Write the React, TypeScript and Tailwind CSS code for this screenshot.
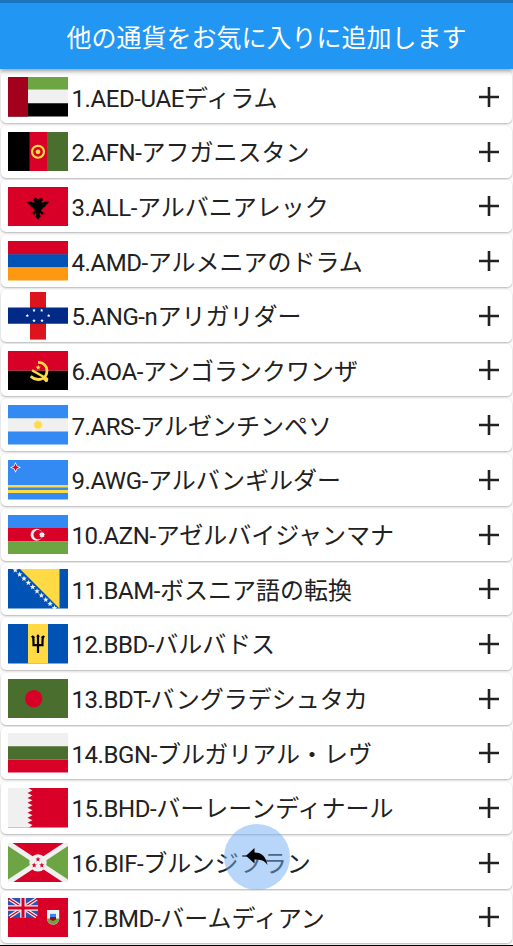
import React from "react";

type Currency = {
  code: string;
  name: string;
  flag: React.ReactNode;
  tall?: boolean;
};

function Star({ x, y, r = 1.5, fill = "#fff" }: { x: number; y: number; r?: number; fill?: string }) {
  return (
    <path
      transform={`translate(${x} ${y}) scale(${r})`}
      fill={fill}
      d="M0 -1 L.26 -.34 L.95 -.31 L.4 .13 L.59 .81 L0 .43 L-.59 .81 L-.4 .13 L-.95 -.31 L-.26 -.34 Z"
    />
  );
}

const CURRENCIES: Currency[] = [
  {
    code: "1.AED-UAE",
    name: "ディラム",
    flag: (
      <>
        <path fill="#6da544" d="M0 0h60v13H0z" />
        <path fill="#f0f0f0" d="M0 13h60v14H0z" />
        <path d="M0 26.5h60v13.5H0z" />
        <path fill="#a2001d" d="M0 0h20v40H0z" />
      </>
    ),
  },
  {
    code: "2.AFN-",
    name: "アフガニスタン",
    flag: (
      <>
        <path d="M0 0h22v40H0z" />
        <path fill="#d80027" d="M21.5 0h18v40h-18z" />
        <path fill="#496e2d" d="M39 0h21v40H39z" />
        <circle cx="30" cy="20" r="6" fill="none" stroke="#ffda44" strokeWidth="2.2" />
        <circle cx="30" cy="20" r="2.4" fill="#ffda44" />
      </>
    ),
  },
  {
    code: "3.ALL-",
    name: "アルバニアレック",
    flag: (
      <>
        <path fill="#d80027" d="M0 0h60v40H0z" />
        <path d="M25 12.5L27 11L30 12L33 11L35 12.5L34.2 14.5L33 15.2L34.500 16L37 15H41L39.800 17L38 18L37.200 20L35 21L34.500 22.600L32.800 23.200L34.200 25L37 27L34.500 26.800L34.200 28.500L32 26L31.500 27.500L32.800 29.500L30 33L27.200 29.500L28.500 27.500L28 26L25.800 28.500L25.500 26.800L23 27L25.800 25L27.200 23.200L25.500 22.600L25 21L22.800 20L22 18L20.200 17L19 15H23L25.500 16L27 15.200L25.800 14.500Z" />
      </>
    ),
  },
  {
    code: "4.AMD-",
    name: "アルメニアのドラム",
    flag: (
      <>
        <path fill="#d80027" d="M0 0h60v14H0z" />
        <path fill="#0052b4" d="M0 13.3h60v13.4H0z" />
        <path fill="#ff9811" d="M0 26.7h60V40H0z" />
      </>
    ),
  },
  {
    code: "5.ANG-n",
    name: "アリガリダー",
    tall: true,
    flag: (
      <>
        <path fill="#dc141b" d="M22 0h16v48H22z" />
        <path fill="#012a87" d="M0 15.6h60v16.4H0z" />
        <Star x={19.3} y={23.8} r={1.9} />
        <Star x={40.7} y={23.8} r={1.9} />
        <Star x={26} y={18.5} r={1.9} />
        <Star x={33.7} y={18.5} r={1.9} />
        <Star x={26} y={29} r={1.9} />
        <Star x={34} y={29} r={1.9} />
      </>
    ),
  },
  {
    code: "6.AOA-",
    name: "アンゴランクワンザ",
    flag: (
      <>
        <path fill="#d80027" d="M0 0h60v20H0z" />
        <path d="M0 20h60v20H0z" />
        <path fill="none" stroke="#ffda44" strokeWidth="2.8" d="M30 11.6c12-.7 12 17.4 0 17.2-3 0-5-1-7.3-3.2" />
        <path fill="none" stroke="#ffda44" strokeWidth="2.5" d="M24 19.4l15 8.6" />
        <path fill="#ffda44" d="M34.8 28.6l2.2-2.4 3.4 1.6-.6 3-2 .8z" />
        <Star x={30.2} y={16.7} r={2.7} fill="#ffda44" />
      </>
    ),
  },
  {
    code: "7.ARS-",
    name: "アルゼンチンペソ",
    flag: (
      <>
        <path fill="#338af3" d="M0 0h60v40H0z" />
        <path fill="#f0f0f0" d="M0 13.3h60v13.4H0z" />
        <circle cx="30" cy="20" r="3.4" fill="#ffda44" />
        <circle cx="30" cy="20" r="3.9" fill="none" stroke="#ffda44" strokeWidth="1" strokeDasharray="1.2 .6" />
      </>
    ),
  },
  {
    code: "9.AWG-",
    name: "アルバンギルダー",
    flag: (
      <>
        <path fill="#338af3" d="M0 0h60v40H0z" />
        <path fill="#ffda44" d="M0 25.3h60v2.4H0zM0 30.4h60v3H0z" />
        <path fill="#fff" d="M7.5 2l1.7 3.8 3.8 1.7-3.8 1.7-1.7 3.8-1.7-3.8L2 7.5l3.8-1.7z" />
        <path fill="#d80027" d="M7.5 3.9l1.2 2.4 2.4 1.2-2.4 1.2-1.2 2.4-1.2-2.4-2.4-1.2 2.4-1.2z" />
      </>
    ),
  },
  {
    code: "10.AZN-",
    name: "アゼルバイジャンマナ",
    flag: (
      <>
        <path fill="#338af3" d="M0 0h60v14H0z" />
        <path fill="#d80027" d="M0 13.2h60v13.5H0z" />
        <path fill="#6da544" d="M0 26.7h60V40H0z" />
        <circle cx="28.6" cy="19.9" r="6" fill="#f0f0f0" />
        <circle cx="30.2" cy="19.9" r="4.7" fill="#d80027" />
        <path fill="#f0f0f0" d="M34 16.8l.8 1.3 1.5-.4-.4 1.5 1.3.8-1.3.8.4 1.5-1.5-.4-.8 1.3-.8-1.3-1.5.4.4-1.5-1.3-.8 1.3-.8-.4-1.5 1.5.4z" />
      </>
    ),
  },
  {
    code: "11.BAM-",
    name: "ボスニア語の転換",
    flag: (
      <>
        <path fill="#0052b4" d="M0 0h60v40H0z" />
        <path fill="#ffda44" d="M12 0h39.5v40z" />
        {[0, 1, 2, 3, 4, 5, 6, 7, 8, 9].map((i) => (
          <Star key={i} x={7.3 + i * 4.35} y={1.2 + i * 4.25} r={3} fill="#f0f0f0" />
        ))}
      </>
    ),
  },
  {
    code: "12.BBD-",
    name: "バルバドス",
    flag: (
      <>
        <path fill="#0052b4" d="M0 0h60v40H0z" />
        <path fill="#ffda44" d="M20 0h20v40H20z" />
        <path fill="none" stroke="#000" strokeWidth="2.2" d="M30 11V29.3M24.8 12.5c1 2.5.7 5 .7 8.9h9c0-3.9-.3-6.4.7-8.9" />
        <path d="M22.8 13.2l1.8-1.8 2.4 1.8-.8 1.3zM37.2 13.2l-1.8-1.8-2.4 1.8.8 1.3zM28.2 12.8L30 10.2l1.8 2.6z" />
      </>
    ),
  },
  {
    code: "13.BDT-",
    name: "バングラデシュタカ",
    flag: (
      <>
        <path fill="#496e2d" d="M0 0h60v40H0z" />
        <circle cx="25.7" cy="19.9" r="8.7" fill="#d80027" />
      </>
    ),
  },
  {
    code: "14.BGN-",
    name: "ブルガリアル・レヴ",
    flag: (
      <>
        <path fill="#f0f0f0" d="M0 0h60v14H0z" />
        <path fill="#496e2d" d="M0 13.3h60v13.4H0z" />
        <path fill="#d80027" d="M0 26.7h60V40H0z" />
      </>
    ),
  },
  {
    code: "15.BHD-",
    name: "バーレーンディナール",
    flag: (
      <>
        <path fill="#d80027" d="M0 0h60v40H0z" />
        <path
          fill="#f0f0f0"
          d="M0 0h20.5l4 2.5-5 2.5 5 2.5-5 2.5 5 2.5-5 2.5 5 2.5-5 2.5 5 2.5-5 2.5 5 2.5-5 2.5 5 2.5-5 2.5 5 2.5-3.5 2.5H0z"
        />
      </>
    ),
  },
  {
    code: "16.BIF-",
    name: "ブルンジフラン",
    flag: (
      <>
        <path fill="#d80027" d="M0 0h60v40H0z" />
        <path fill="#6da544" d="M0 0l28 20L0 40zM60 0L32 20l28 20z" />
        <path stroke="#f0f0f0" strokeWidth="5" d="M0 0l60 40M60 0L0 40" />
        <circle cx="30" cy="20" r="8.7" fill="#f0f0f0" />
        <Star x={30} y={16.5} r={2.7} fill="#d80027" />
        <Star x={26.2} y={22.5} r={2.7} fill="#d80027" />
        <Star x={33.8} y={22.5} r={2.7} fill="#d80027" />
      </>
    ),
  },
  {
    code: "17.BMD-",
    name: "バームディアン",
    flag: (
      <>
        <path fill="#d80027" d="M0 0h60v40H0z" />
        <path fill="#2e52b2" d="M0 0h30v20H0z" />
        <path stroke="#f0f0f0" strokeWidth="3.6" d="M1.5 1l27 18M28.5 1l-27 18" />
        <path stroke="#d80027" strokeWidth="1.3" d="M0 0l30 20M30 0L0 20" />
        <path stroke="#f0f0f0" strokeWidth="5.6" d="M15 0v20M0 10h30" />
        <path stroke="#d80027" strokeWidth="3" d="M15 0v20M0 10h30" />
        <path fill="#f3f3f3" d="M39 12h12.2v8.5c0 8.5-12.2 8.5-12.2 0z" />
        <path fill="#6da544" d="M39 20.8h12.2c0 8-12.2 8-12.2 0z" />
        <path fill="#338af3" d="M42 16h6v3.3h-6z" />
        <path fill="#a2001d" d="M42 19.2h6v2.4l-3 1.6-3-1.6z" />
      </>
    ),
  },
];

function Flag({ tall, children }: { tall?: boolean; children: React.ReactNode }) {
  return (
    <svg
      viewBox={tall ? "0 0 60 48" : "0 0 60 40"}
      preserveAspectRatio="none"
      className={tall ? "h-[47.6px] w-[60px] shrink-0" : "h-[39.6px] w-[60px] shrink-0"}
    >
      {children}
    </svg>
  );
}

function CurrencyRow({ item }: { item: Currency }) {
  return (
    <li className="flex h-[52px] shrink-0 items-center rounded-[5px] bg-white pr-[13px] pl-[7px] shadow-[0_1px_2px_rgba(0,0,0,0.28)]">
      <Flag tall={item.tall}>{item.flag}</Flag>
      <span className="ml-[3.4px] flex-1 pt-[3px] text-[24px] leading-[36px] whitespace-nowrap text-[#212121]">
        <span className="tracking-[-0.4px]">{item.code}</span>
        {item.name}
      </span>
      <button type="button" aria-label="追加" className="shrink-0">
        <svg viewBox="0 0 20 20" className="block h-5 w-5">
          <path d="M10 0v20M0 10h20" stroke="#212121" strokeWidth="2.6" />
        </svg>
      </button>
    </li>
  );
}

export default function App() {
  return (
    <div className="relative flex h-[946px] w-[513px] flex-col overflow-hidden border-b border-black bg-[#fafafa] font-[Roboto,'Noto_Sans_CJK_JP',sans-serif]">
      {/* Status bar strip + app bar */}
      <header className="z-10 flex h-[69px] shrink-0 flex-col bg-[#2196f3] shadow-[0_2px_5px_rgba(0,0,0,0.4)]">
        <div className="h-[3px] bg-[#1a75bd]" />
        <h1 className="flex flex-1 items-center pt-[5px] pl-[66.5px] text-[25px] leading-[36px] font-normal whitespace-nowrap text-white">
          他の通貨をお気に入りに追加します
        </h1>
      </header>

      <ul className="flex flex-col gap-[2.7px] pt-[2px] pr-px pl-px">
        {CURRENCIES.map((item) => (
          <CurrencyRow key={item.code} item={item} />
        ))}
      </ul>

      {/* Floating back button */}
      <button
        type="button"
        aria-label="戻る"
        className="absolute bottom-[55px] left-[224px] z-20 flex h-[66px] w-[66px] items-center justify-center rounded-full bg-[#70aef3]/50"
      >
        <svg viewBox="0 0 22 18" className="h-[18px] w-[22px]">
          <path d="M8.5 0v4.500C16 4.500 20 9 21.500 17 18.500 12.700 15 11.600 8.500 11.600v4L0 7.800z" />
        </svg>
      </button>
    </div>
  );
}
